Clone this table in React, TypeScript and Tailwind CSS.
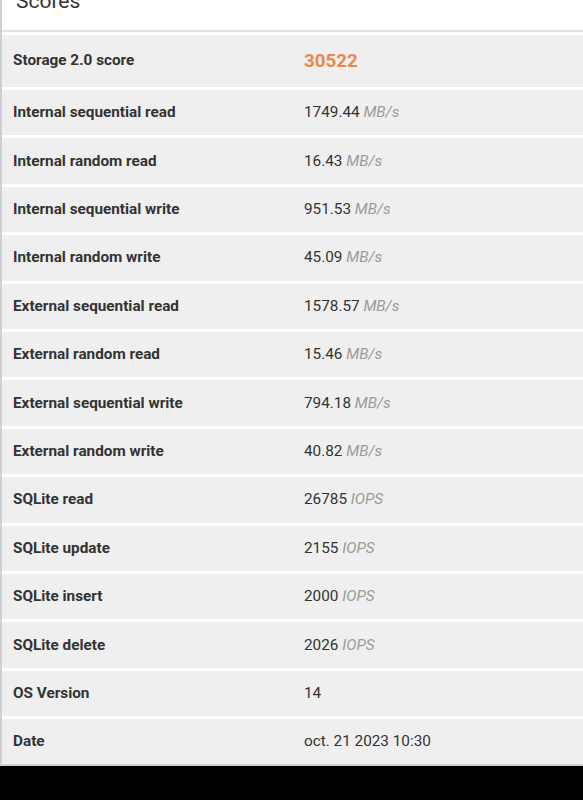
import React from "react";

type Row = { label: string; value: string; unit?: string };

const rows: Row[] = [
  { label: "Internal sequential read", value: "1749.44", unit: "MB/s" },
  { label: "Internal random read", value: "16.43", unit: "MB/s" },
  { label: "Internal sequential write", value: "951.53", unit: "MB/s" },
  { label: "Internal random write", value: "45.09", unit: "MB/s" },
  { label: "External sequential read", value: "1578.57", unit: "MB/s" },
  { label: "External random read", value: "15.46", unit: "MB/s" },
  { label: "External sequential write", value: "794.18", unit: "MB/s" },
  { label: "External random write", value: "40.82", unit: "MB/s" },
  { label: "SQLite read", value: "26785", unit: "IOPS" },
  { label: "SQLite update", value: "2155", unit: "IOPS" },
  { label: "SQLite insert", value: "2000", unit: "IOPS" },
  { label: "SQLite delete", value: "2026", unit: "IOPS" },
  { label: "OS Version", value: "14" },
  { label: "Date", value: "oct. 21 2023 10:30" },
];

export default function App() {
  return (
    <div
      className="w-[583px] h-[800px] bg-black flex flex-col overflow-hidden"
      style={{ fontFamily: "Roboto, 'Liberation Sans', sans-serif" }}
    >
      <div className="bg-white border-l-2 border-[#cfcfcf] flex flex-col">
        <div className="h-[32px] overflow-hidden border-b-2 border-[#e2e2e2]">
          <div className="mt-[-11px] pl-[14px] text-[21px] text-[#333] leading-[24px]">Scores</div>
        </div>
        <div className="flex flex-col gap-[3px] pt-[3px]">
          <div className="h-[52px] bg-[#efefef] grid grid-cols-[302px_1fr] items-center">
            <div className="pl-[11px] text-[15.3px] font-bold text-[#333] pb-[2px]">Storage 2.0 score</div>
            <div className="text-[18.8px] font-bold text-[#e8894a]">30522</div>
          </div>
          {rows.map((r) => (
            <div
              key={r.label}
              className="h-[45.4px] bg-[#efefef] grid grid-cols-[302px_1fr] items-center"
            >
              <div className="pl-[11px] text-[15.3px] font-bold text-[#333]">{r.label}</div>
              <div className="text-[15.3px] text-[#333]">
                {r.value}
                {r.unit && <span className="italic text-[#9a9a9a]"> {r.unit}</span>}
              </div>
            </div>
          ))}
        </div>
        <div className="h-[2px] bg-[#d0d0d0]" />
      </div>
    </div>
  );
}
